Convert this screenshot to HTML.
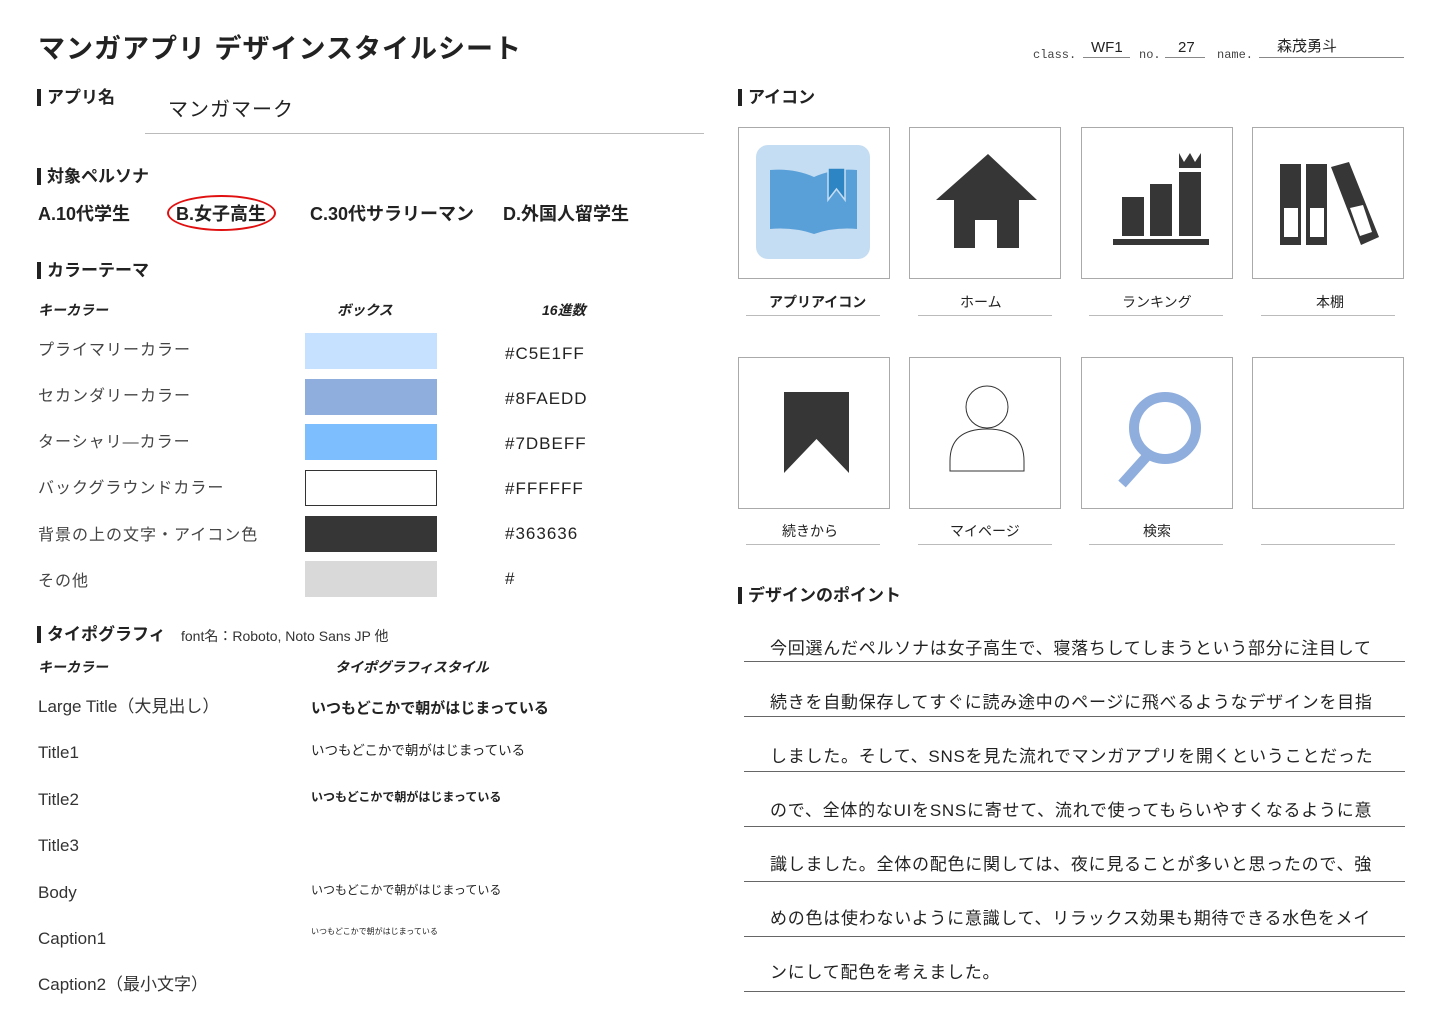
<!DOCTYPE html>
<html><head><meta charset="utf-8"><style>
body{margin:0;width:1440px;height:1024px;background:#fff;position:relative;overflow:hidden;font-family:"Liberation Sans","Noto Sans CJK JP",sans-serif;color:#222}
.t{position:absolute;white-space:nowrap;line-height:1;transform:translateY(2px)}
.h{font-weight:bold;font-size:17px;border-left:4px solid #222;padding-left:6px;line-height:17px}
.b{position:absolute;border:1px solid #aaa;background:#fff;width:150px;height:150px}
.u{position:absolute;height:0;border-top:1.5px solid #bbb}
.sw{position:absolute;left:305px;width:132px;height:36px}
.lbl{font-size:16px;color:#444;letter-spacing:1px}
.hex{font-size:17px;letter-spacing:1px}
.dl{position:absolute;left:744px;width:661px;border-top:1px solid #666}
.dt{font-size:17px;left:770px;letter-spacing:0.75px}
</style></head><body>
<div class="t" style="left:38px;top:34px;font-size:27px;font-weight:bold;letter-spacing:1px">マンガアプリ デザインスタイルシート</div>

<div class="t" style="left:1033px;top:47px;font-size:12px;font-family:'Liberation Mono',monospace;color:#444">class.</div>
<div class="u" style="left:1083px;top:57px;width:47px;border-color:#888;border-top-width:1px"></div>
<div class="t" style="left:1091px;top:38px;font-size:15px">WF1</div>
<div class="t" style="left:1139px;top:47px;font-size:12px;font-family:'Liberation Mono',monospace;color:#444">no.</div>
<div class="u" style="left:1165px;top:57px;width:40px;border-color:#888;border-top-width:1px"></div>
<div class="t" style="left:1178px;top:38px;font-size:15px">27</div>
<div class="t" style="left:1217px;top:47px;font-size:12px;font-family:'Liberation Mono',monospace;color:#444">name.</div>
<div class="u" style="left:1259px;top:57px;width:145px;border-color:#888;border-top-width:1px"></div>
<div class="t" style="left:1277px;top:37px;font-size:15px">森茂勇斗</div>

<div class="t h" style="left:37px;top:87px">アプリ名</div>
<div class="t" style="left:168px;top:98px;font-size:20px;letter-spacing:1px">マンガマーク</div>
<div class="u" style="left:145px;top:133px;width:559px"></div>

<div class="t h" style="left:37px;top:166px">対象ペルソナ</div>
<div class="t" style="left:38px;top:203px;font-size:18px;font-weight:bold">A.10代学生</div>
<div class="t" style="left:176px;top:203px;font-size:18px;font-weight:bold">B.女子高生</div>
<div style="position:absolute;left:167px;top:195px;width:105px;height:32px;border:2px solid #e01010;border-radius:50%"></div>
<div class="t" style="left:310px;top:203px;font-size:18px;font-weight:bold">C.30代サラリーマン</div>
<div class="t" style="left:503px;top:203px;font-size:18px;font-weight:bold">D.外国人留学生</div>

<div class="t h" style="left:37px;top:260px">カラーテーマ</div>
<div class="t" style="left:38px;top:301px;font-size:14px;font-weight:bold;font-style:italic">キーカラー</div>
<div class="t" style="left:337px;top:301px;font-size:14px;font-weight:bold;font-style:italic">ボックス</div>
<div class="t" style="left:542px;top:301px;font-size:14px;font-weight:bold;font-style:italic">16進数</div>

<div class="t lbl" style="left:38px;top:341px">プライマリーカラー</div>
<div class="sw" style="top:333px;background:#C5E1FF"></div>
<div class="t hex" style="left:505px;top:343px">#C5E1FF</div>
<div class="t lbl" style="left:38px;top:387px">セカンダリーカラー</div>
<div class="sw" style="top:379px;background:#8FAEDD"></div>
<div class="t hex" style="left:505px;top:388px">#8FAEDD</div>
<div class="t lbl" style="left:38px;top:433px">ターシャリ—カラー</div>
<div class="sw" style="top:424px;background:#7DBEFF"></div>
<div class="t hex" style="left:505px;top:433px">#7DBEFF</div>
<div class="t lbl" style="left:38px;top:479px">バックグラウンドカラー</div>
<div class="sw" style="top:470px;border:1px solid #333;width:130px;height:34px"></div>
<div class="t hex" style="left:505px;top:478px">#FFFFFF</div>
<div class="t lbl" style="left:38px;top:526px">背景の上の文字・アイコン色</div>
<div class="sw" style="top:516px;background:#363636"></div>
<div class="t hex" style="left:505px;top:523px">#363636</div>
<div class="t lbl" style="left:38px;top:572px">その他</div>
<div class="sw" style="top:561px;background:#d9d9d9"></div>
<div class="t hex" style="left:505px;top:568px">#</div>

<div class="t h" style="left:37px;top:624px">タイポグラフィ</div>
<div class="t" style="left:181px;top:627px;font-size:14px;color:#333">font名：Roboto, Noto Sans JP 他</div>
<div class="t" style="left:38px;top:658px;font-size:14px;font-weight:bold;font-style:italic">キーカラー</div>
<div class="t" style="left:335px;top:658px;font-size:14px;font-weight:bold;font-style:italic">タイポグラフィスタイル</div>

<div class="t" style="left:38px;top:696px;font-size:17px;color:#333">Large Title（大見出し）</div>
<div class="t" style="left:311px;top:699px;font-size:15px;font-weight:bold">いつもどこかで朝がはじまっている</div>
<div class="t" style="left:38px;top:742px;font-size:17px;color:#333">Title1</div>
<div class="t" style="left:311px;top:742px;font-size:13.5px">いつもどこかで朝がはじまっている</div>
<div class="t" style="left:38px;top:789px;font-size:17px;color:#333">Title2</div>
<div class="t" style="left:311px;top:789px;font-size:12px;font-weight:bold">いつもどこかで朝がはじまっている</div>
<div class="t" style="left:38px;top:835px;font-size:17px;color:#333">Title3</div>
<div class="t" style="left:38px;top:882px;font-size:17px;color:#333">Body</div>
<div class="t" style="left:311px;top:882px;font-size:12px">いつもどこかで朝がはじまっている</div>
<div class="t" style="left:38px;top:928px;font-size:17px;color:#333">Caption1</div>
<div class="t" style="left:311px;top:926px;font-size:8px">いつもどこかで朝がはじまっている</div>
<div class="t" style="left:38px;top:974px;font-size:17px;color:#333">Caption2（最小文字）</div>

<div class="t h" style="left:738px;top:87px">アイコン</div>

<div class="b" style="left:738px;top:127px">
<svg width="150" height="150"><rect x="17" y="17" width="114" height="114" rx="12" fill="#C5DDF2"/>
<path d="M31 42 Q55 40 75 49 Q95 40 118 42 L118 101 Q95 99 75 106 Q55 99 31 101 Z" fill="#5AA0D8"/>
<path d="M89 40 L106 40 L106 72 L97.5 61 L89 72 Z" fill="#2E85C3" stroke="#C5DDF2" stroke-width="1.5"/></svg></div>
<div class="b" style="left:909px;top:127px">
<svg width="150" height="150"><path d="M78 26 L127 72 L109 72 L109 120 L87 120 L87 92 L65 92 L65 120 L44 120 L44 72 L26 72 Z" fill="#363636"/></svg></div>
<div class="b" style="left:1081px;top:127px">
<svg width="150" height="150"><rect x="40" y="69" width="22" height="39" fill="#363636"/><rect x="68" y="56" width="22" height="52" fill="#363636"/><rect x="97" y="44" width="22" height="64" fill="#363636"/><path d="M97 25 L102 34 L108 25 L113 34 L119 25 L119 40 L97 40Z" fill="#363636"/><rect x="31" y="111" width="96" height="6" fill="#363636"/></svg></div>
<div class="b" style="left:1252px;top:127px">
<svg width="150" height="150"><rect x="27" y="36" width="21" height="81" fill="#363636"/><rect x="31" y="80" width="14" height="29" fill="#fff"/><rect x="53" y="36" width="21" height="81" fill="#363636"/><rect x="57" y="80" width="14" height="29" fill="#fff"/><path d="M78 39 L96 34 L126 109 L108 117 Z" fill="#363636"/><path d="M97 80 L110 77 L119 104 L107 108 Z" fill="#fff"/></svg></div>

<div class="t" style="left:769px;top:293px;font-size:14px;font-weight:bold">アプリアイコン</div>
<div class="t" style="left:960px;top:293px;font-size:14px">ホーム</div>
<div class="t" style="left:1122px;top:293px;font-size:14px">ランキング</div>
<div class="t" style="left:1316px;top:293px;font-size:14px">本棚</div>
<div class="u" style="left:746px;top:315px;width:134px"></div>
<div class="u" style="left:918px;top:315px;width:134px"></div>
<div class="u" style="left:1089px;top:315px;width:134px"></div>
<div class="u" style="left:1261px;top:315px;width:134px"></div>

<div class="b" style="left:738px;top:357px">
<svg width="150" height="150"><path d="M45 34 L110 34 L110 115 L77.5 81 L45 115 Z" fill="#363636"/></svg></div>
<div class="b" style="left:909px;top:357px">
<svg width="150" height="150"><ellipse cx="77" cy="49" rx="21" ry="21" fill="none" stroke="#333" stroke-width="1"/><path d="M40 113 L40 103 Q40 71 77 71 Q114 71 114 103 L114 113 Z" fill="none" stroke="#333" stroke-width="1"/></svg></div>
<div class="b" style="left:1081px;top:357px">
<svg width="150" height="150"><ellipse cx="83" cy="70" rx="31" ry="31" fill="none" stroke="#8FAEDD" stroke-width="10"/><path d="M66 97 L40 126" stroke="#8FAEDD" stroke-width="10"/></svg></div>
<div class="b" style="left:1252px;top:357px"></div>

<div class="t" style="left:782px;top:522px;font-size:14px">続きから</div>
<div class="t" style="left:950px;top:522px;font-size:14px">マイページ</div>
<div class="t" style="left:1143px;top:522px;font-size:14px">検索</div>
<div class="u" style="left:746px;top:544px;width:134px"></div>
<div class="u" style="left:918px;top:544px;width:134px"></div>
<div class="u" style="left:1089px;top:544px;width:134px"></div>
<div class="u" style="left:1261px;top:544px;width:134px"></div>

<div class="t h" style="left:738px;top:585px">デザインのポイント</div>
<div class="t dt" style="top:638px">今回選んだペルソナは女子高生で、寝落ちしてしまうという部分に注目して</div>
<div class="dl" style="top:661px"></div>
<div class="t dt" style="top:692px">続きを自動保存してすぐに読み途中のページに飛べるようなデザインを目指</div>
<div class="dl" style="top:716px"></div>
<div class="t dt" style="top:746px">しました。そして、SNSを見た流れでマンガアプリを開くということだった</div>
<div class="dl" style="top:771px"></div>
<div class="t dt" style="top:800px">ので、全体的なUIをSNSに寄せて、流れで使ってもらいやすくなるように意</div>
<div class="dl" style="top:826px"></div>
<div class="t dt" style="top:854px">識しました。全体の配色に関しては、夜に見ることが多いと思ったので、強</div>
<div class="dl" style="top:881px"></div>
<div class="t dt" style="top:908px">めの色は使わないように意識して、リラックス効果も期待できる水色をメイ</div>
<div class="dl" style="top:936px"></div>
<div class="t dt" style="top:962px">ンにして配色を考えました。</div>
<div class="dl" style="top:991px"></div>
</body></html>
